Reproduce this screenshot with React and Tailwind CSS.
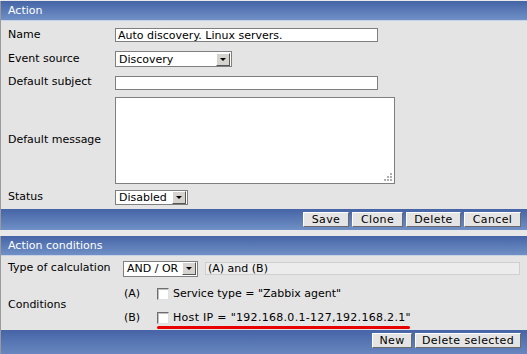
import React from 'react';

function Select({ value, width, height = 16 }) {
  return (
    <div
      className="flex items-center bg-white border border-[#7f7f7f] pl-[3px] pr-[1px]"
      style={{ width, height }}
    >
      <span className="flex-1 leading-none whitespace-nowrap">{value}</span>
      <span className="w-[14px] h-[13px] flex items-center justify-center bg-[#d6d3ce] border border-t-white border-l-white border-b-[#555] border-r-[#555]">
        <span className="w-0 h-0 border-l-[3px] border-r-[3px] border-t-[3px] border-l-transparent border-r-transparent border-t-black"></span>
      </span>
    </div>
  );
}

function Button({ children, w }) {
  return (
    <button
      className="h-[15px] bg-[#e4e4e4] border border-t-white border-l-white border-b-[#6a6a6a] border-r-[#6a6a6a] text-[11px] leading-none tracking-[0.4px]"
      style={{ width: w }}
    >
      {children}
    </button>
  );
}

function Checkbox() {
  return (
    <span className="w-[12px] h-[12px] bg-white border border-t-[#6e6e6e] border-l-[#6e6e6e] border-b-[#e0e0e0] border-r-[#e0e0e0] shadow-[inset_1px_1px_0_#c0c0c0]"></span>
  );
}

function Header({ title }) {
  return (
    <div className="h-[20px] flex items-center pt-[1px] px-[7px] text-white bg-gradient-to-b from-[#4664a6] to-[#7090c6] border-b border-[#c8d2e6]">
      {title}
    </div>
  );
}

export default function App() {
  return (
    <div
      className="w-[527px] h-[354px] overflow-hidden bg-[#e8e8e8] text-[11px] text-black"
      style={{ fontFamily: '"DejaVu Sans", Verdana, sans-serif' }}
    >
      {/* Action */}
      <div className="mt-[1px] border-l border-[#9a9a9a]">
        <Header title="Action" />
        <div className="bg-[#e4e4e4] pt-[2px]">
          <div className="flex items-center h-[24px]">
            <span className="w-[114px] pl-[7px] shrink-0">Name</span>
            <div className="w-[263px] h-[14px] bg-white border border-[#7f7f7f] px-[2px] flex items-center leading-none">
              Auto discovery. Linux servers.
            </div>
          </div>
          <div className="flex items-center h-[24px]">
            <span className="w-[114px] pl-[7px] shrink-0">Event source</span>
            <Select value="Discovery" width={117} />
          </div>
          <div className="flex items-center h-[23px]">
            <span className="w-[114px] pl-[7px] shrink-0">Default subject</span>
            <div className="w-[263px] h-[14px] bg-white border border-[#7f7f7f]"></div>
          </div>
          <div className="flex items-center h-[92px]">
            <span className="w-[114px] pl-[7px] shrink-0">Default message</span>
            <div className="relative w-[280px] h-[87px] bg-white border border-[#7f7f7f]">
              <svg className="absolute right-[2px] bottom-[2px]" width="9" height="9" viewBox="0 0 9 9">
                <rect x="7" y="1" width="2" height="2" fill="#b0b0b0" />
                <rect x="4" y="4" width="2" height="2" fill="#b0b0b0" />
                <rect x="7" y="4" width="2" height="2" fill="#b0b0b0" />
                <rect x="1" y="7" width="2" height="2" fill="#b0b0b0" />
                <rect x="4" y="7" width="2" height="2" fill="#b0b0b0" />
                <rect x="7" y="7" width="2" height="2" fill="#b0b0b0" />
              </svg>
            </div>
          </div>
          <div className="flex items-center h-[23px]">
            <span className="w-[114px] pl-[7px] shrink-0">Status</span>
            <Select value="Disabled" width={73} height={15} />
          </div>
        </div>
        <div className="h-[21px] flex items-center justify-end gap-[3px] pr-[6px] bg-gradient-to-b from-[#4664a6] to-[#7090c6]">
          <Button w={46}>Save</Button>
          <Button w={51}>Clone</Button>
          <Button w={55}>Delete</Button>
          <Button w={57}>Cancel</Button>
        </div>
      </div>

      <div className="h-[6px]"></div>

      {/* Action conditions */}
      <div className="border-l border-[#9a9a9a]">
        <Header title="Action conditions" />
        <div className="bg-[#e4e4e4]">
          <div className="flex items-center h-[25px]">
            <span className="w-[122px] pl-[7px] shrink-0">Type of calculation</span>
            <Select value="AND / OR" width={75} />
            <div className="ml-[7px] w-[315px] h-[13px] bg-[#ececec] border border-[#cfcfcf] flex items-center px-[2px] leading-none">
              (A) and (B)
            </div>
          </div>
          <div className="flex items-center h-[49px]">
            <span className="w-[122px] pl-[7px] shrink-0">Conditions</span>
            <div className="relative flex flex-col pt-[1px]">
              <div className="flex items-center h-[24px]">
                <span className="w-[34px] pl-[1px]">(A)</span>
                <Checkbox />
                <span className="ml-[4px]">Service type = "Zabbix agent"</span>
              </div>
              <div className="flex items-center h-[24px]">
                <span className="w-[34px] pl-[1px]">(B)</span>
                <Checkbox />
                <span className="ml-[4px] tracking-[0.3px]">Host IP = "192.168.0.1-127,192.168.2.1"</span>
              </div>
              <div className="absolute left-[34px] top-[45px] w-[253px] h-[3px] rounded-full bg-[#e80000]"></div>
            </div>
          </div>
        </div>
        <div className="h-[30px] flex items-start justify-end gap-[3px] pr-[6px] pt-[3px] bg-gradient-to-b from-[#4664a6] to-[#7090c6]">
          <Button w={40}>New</Button>
          <Button w={106}>Delete selected</Button>
        </div>
      </div>
    </div>
  );
}
